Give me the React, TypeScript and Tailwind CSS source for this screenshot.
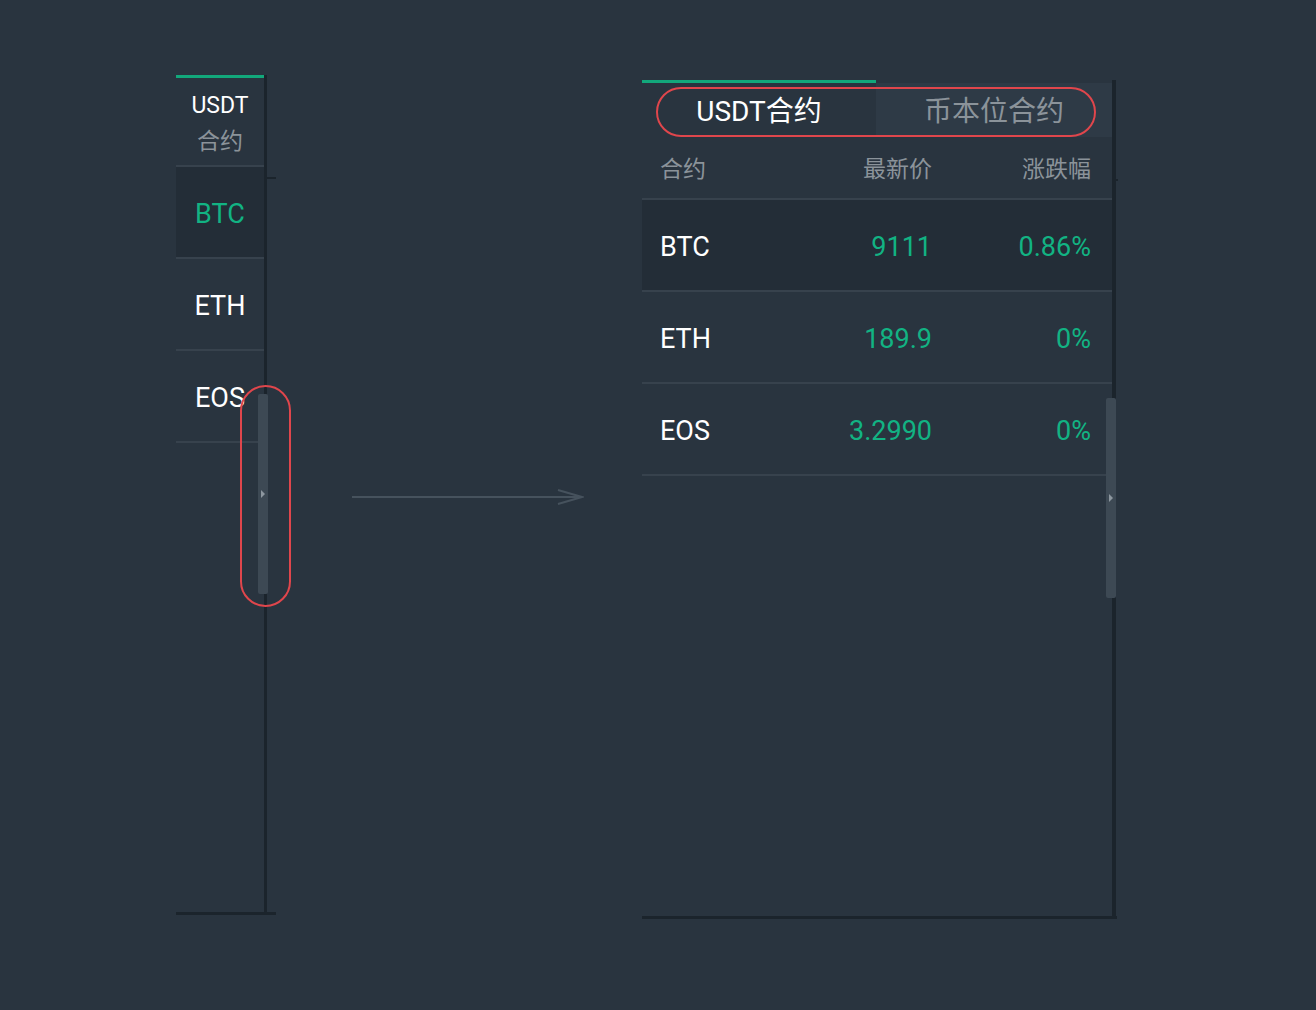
import React from "react";

const rows = [
  { name: "BTC", price: "9111", change: "0.86%", active: true },
  { name: "ETH", price: "189.9", change: "0%", active: false },
  { name: "EOS", price: "3.2990", change: "0%", active: false },
];

function ScrollHandle() {
  return (
    <div className="flex h-[200px] w-[10px] items-center justify-center rounded-[2px] bg-[#3d4954]">
      <svg width="6" height="10" viewBox="0 0 6 10">
        <path d="M1 1 L5 5 L1 9 Z" fill="#8d979f" />
      </svg>
    </div>
  );
}

function CollapsedPanel() {
  return (
    <div className="relative mt-[75px] ml-[176px] flex h-[840px] w-[100px] flex-col">
      <div className="flex h-[837px] w-[91px] flex-col border-r-[3px] border-[#1b242c]">
        <div className="h-[3px] w-[88px] bg-[#12a87b]" />
        <div className="flex h-[89px] flex-col items-center justify-center border-b-2 border-[#37424d] pt-[4px] leading-[36px]">
          <span className="text-[23px] text-white">USDT</span>
          <span className="text-[23px] text-[#8b939a]">合约</span>
        </div>
        {rows.map((r) => (
          <div
            key={r.name}
            className={`flex h-[92px] items-center justify-center border-b-2 border-[#37424d] pt-[4px] text-[27px] ${
              r.active ? "bg-[#232d37] text-[#12b383]" : "text-white"
            }`}
          >
            {r.name}
          </div>
        ))}
      </div>
      <div className="h-[3px] w-[100px] bg-[#1b242c]" />
      {/* small tick on the side line */}
      <div className="absolute left-[88px] top-[102px] h-[2px] w-[12px] bg-[#1b242c]" />
      <div className="absolute left-[82px] top-[319px]">
        <ScrollHandle />
      </div>
      <div className="absolute left-[64px] top-[310px] h-[222px] w-[51px] rounded-[26px] border-2 border-[#e0464c]" />
    </div>
  );
}

function Arrow() {
  return (
    <div className="mt-[485px] ml-[76px]">
      <svg width="232" height="24" viewBox="0 0 232 24">
        <line x1="0" y1="12" x2="230" y2="12" stroke="#46525d" strokeWidth="2" />
        <path d="M206 5 L230 12 L206 19" fill="none" stroke="#46525d" strokeWidth="2" />
      </svg>
    </div>
  );
}

function ExpandedPanel() {
  return (
    <div className="relative mt-[80px] ml-[58px] flex flex-col">
      <div className="flex h-[836px] w-[474px] flex-col border-r-4 border-[#1b242c]">
        <div className="flex h-[57px] w-[470px] flex-col">
          <div className="flex">
            <div className="h-[3px] w-[234px] bg-[#12a87b]" />
          </div>
          <div className="flex flex-1">
            <div className="flex w-[234px] items-center justify-center pt-[3px] text-[28px] text-white">
              USDT合约
            </div>
            <div className="flex flex-1 items-center justify-center bg-[#2e3a46] pt-[3px] text-[28px] text-[#8b939a]">
              币本位合约
            </div>
          </div>
        </div>
        <div className="flex h-[63px] items-center border-b-2 border-[#37424d] px-[18px] pt-[5px] pr-[21px] text-[23px] text-[#8b939a]">
          <span className="w-[180px]">合约</span>
          <span className="w-[92px] text-right">最新价</span>
          <span className="flex-1 text-right">涨跌幅</span>
        </div>
        {rows.map((r) => (
          <div
            key={r.name}
            className={`flex h-[92px] items-center border-b-2 border-[#37424d] px-[18px] pt-[4px] pr-[21px] text-[27px] ${
              r.active ? "bg-[#232d37]" : ""
            }`}
          >
            <span className="w-[180px] text-white">{r.name}</span>
            <span className="w-[92px] whitespace-nowrap text-right text-[#12b383]">{r.price}</span>
            <span className="flex-1 text-right text-[#12b383]">{r.change}</span>
          </div>
        ))}
      </div>
      <div className="h-[3px] w-[475px] bg-[#1b242c]" />
      <div className="absolute left-[470px] top-[99px] h-[2px] w-[6px] bg-[#1b242c]" />
      <div className="absolute left-[464px] top-[318px]">
        <ScrollHandle />
      </div>
      <div className="absolute left-[14px] top-[7px] h-[50px] w-[440px] rounded-[25px] border-2 border-[#e0464c]" />
    </div>
  );
}

export default function App() {
  return (
    <div
      className="flex h-[1010px] w-[1316px] items-start bg-[#29343f]"
      style={{ fontFamily: 'Roboto, "Noto Sans CJK SC", sans-serif' }}
    >
      <CollapsedPanel />
      <Arrow />
      <ExpandedPanel />
    </div>
  );
}
